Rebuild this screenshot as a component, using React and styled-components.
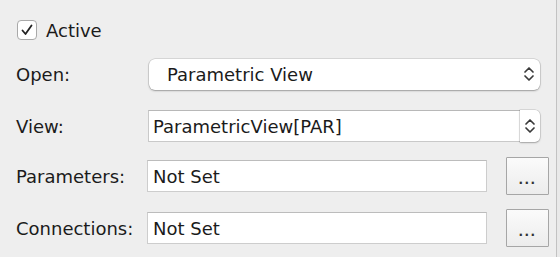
import React from "react";
import styled, { createGlobalStyle } from "styled-components";

const Global = createGlobalStyle`
  html, body {
    margin: 0;
    padding: 0;
    background: #e9e9e9;
  }
  body {
    font-family: "DejaVu Sans", "Liberation Sans", sans-serif;
    color: #1b1b1b;
  }
`;

const Panel = styled.div`
  width: 557px;
  height: 257px;
  box-sizing: border-box;
  background: #eeeeee;
  border-right: 1px solid #c2c2c2;
  padding: 20px 0 0 16px;
  display: flex;
  flex-direction: column;
  font-size: 18px;
`;

const CheckRow = styled.label`
  display: flex;
  align-items: center;
  gap: 9px;
  height: 20px;
  padding-left: 1px;
`;

const CheckBox = styled.span`
  width: 18px;
  height: 18px;
  border: 1px solid #a9a9a9;
  border-radius: 4px;
  background: #fff;
  display: flex;
  align-items: center;
  justify-content: center;
`;

const Row = styled.div`
  display: grid;
  grid-template-columns: 130px 1fr;
  grid-template-rows: 32px;
  align-items: center;
  height: 32px;
  margin-top: ${(p) => p.$top}px;
`;

const Label = styled.span`
  white-space: nowrap;
`;

const Popup = styled.div`
  margin-left: 3px;
  width: 391px;
  height: 31px;
  box-sizing: border-box;
  background: #fff;
  border-radius: 6px;
  box-shadow: 0 0 0 0.5px rgba(0, 0, 0, 0.18), 0 1px 2px rgba(0, 0, 0, 0.28);
  display: flex;
  align-items: center;
  justify-content: space-between;
  padding: 0 5px 0 18px;
`;

const Combo = styled.div`
  margin-left: 2px;
  width: 392px;
  height: 32px;
  display: flex;
`;

const ComboInput = styled.div`
  flex: 1;
  background: #fff;
  border: 1px solid #c9c9c9;
  border-top-color: #b8b8b8;
  border-right: none;
  display: flex;
  align-items: center;
  padding-left: 4px;
`;

const ComboStepper = styled.div`
  width: 20px;
  background: #fff;
  border-radius: 0 5px 5px 0;
  box-shadow: 0 0 0 0.5px rgba(0, 0, 0, 0.18), 0 1px 2px rgba(0, 0, 0, 0.25);
  display: flex;
  align-items: center;
  justify-content: center;
`;

const FieldLine = styled.div`
  display: flex;
  align-items: center;
  height: 32px;
  margin-left: 1px;
`;

const TextField = styled.div`
  width: 340px;
  height: 32px;
  box-sizing: border-box;
  background: #fff;
  border: 1px solid #cdcdcd;
  border-top-color: #bcbcbc;
  display: flex;
  align-items: center;
  padding-left: 5px;
`;

const DotsButton = styled.button`
  margin: -3px 0 -3px 19px;
  width: 43px;
  height: 38px;
  box-sizing: border-box;
  border: 1px solid #a6a6a6;
  border-radius: 1px;
  background: linear-gradient(#fbfbfb, #ececec);
  font-family: inherit;
  font-size: 12px;
  font-weight: bold;
  color: #333;
  padding: 7px 0 0;
  letter-spacing: 1.5px;
`;

const Chevrons = () => (
  <svg width="12" height="20" viewBox="0 0 12 20">
    <path
      d="M2 8 L6 4 L10 8 M2 12 L6 16 L10 12"
      fill="none"
      stroke="#3a3a3a"
      strokeWidth="1.7"
      strokeLinecap="round"
      strokeLinejoin="round"
    />
  </svg>
);

export default function App() {
  return (
    <>
      <Global />
      <Panel>
        <CheckRow>
          <CheckBox>
            <svg width="14" height="14" viewBox="0 0 14 14">
              <path
                d="M2.5 7.5 L5.5 11 L11.5 2.5"
                fill="none"
                stroke="#222"
                strokeWidth="1.8"
                strokeLinecap="round"
                strokeLinejoin="round"
              />
            </svg>
          </CheckBox>
          Active
        </CheckRow>

        <Row $top={18}>
          <Label>Open:</Label>
          <Popup>
            Parametric View
            <Chevrons />
          </Popup>
        </Row>

        <Row $top={20}>
          <Label>View:</Label>
          <Combo>
            <ComboInput>ParametricView[PAR]</ComboInput>
            <ComboStepper>
              <Chevrons />
            </ComboStepper>
          </Combo>
        </Row>

        <Row $top={18}>
          <Label>Parameters:</Label>
          <FieldLine>
            <TextField>Not Set</TextField>
            <DotsButton>...</DotsButton>
          </FieldLine>
        </Row>

        <Row $top={20}>
          <Label>Connections:</Label>
          <FieldLine>
            <TextField>Not Set</TextField>
            <DotsButton>...</DotsButton>
          </FieldLine>
        </Row>
      </Panel>
    </>
  );
}
